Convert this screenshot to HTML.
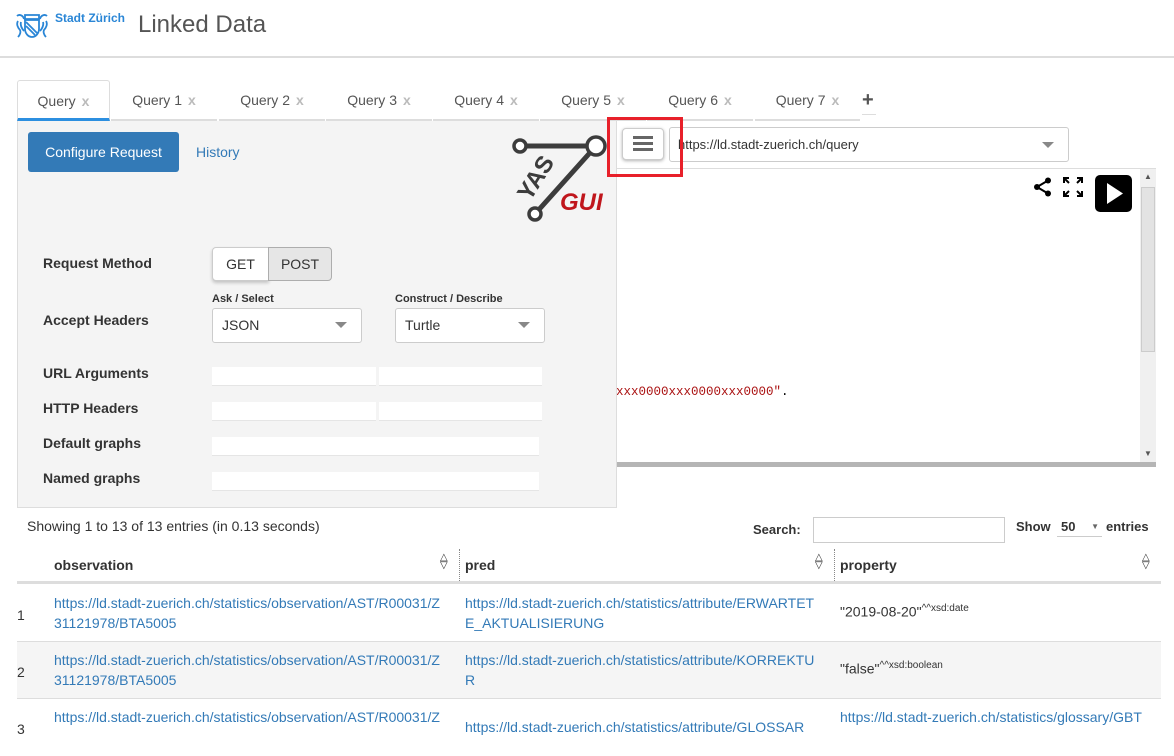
<!DOCTYPE html>
<html><head><meta charset="utf-8"><style>
*{box-sizing:border-box;margin:0;padding:0}
body{width:1174px;height:730px;overflow:hidden;background:#fff;font-family:"Liberation Sans",Arial,sans-serif;color:#333;font-size:14px;position:relative}
.abs{position:absolute}
a{color:#337ab7;text-decoration:none}
.tab{position:absolute;top:80px;height:41px;line-height:41px;font-size:14px;color:#555;text-align:center;border-bottom:2px solid #ddd}
.tab .x{color:#bbb;font-weight:bold;margin-left:6px}
.lbl{position:absolute;left:43px;font-weight:bold;font-size:14px;color:#333}
.inp{position:absolute;background:#fff;border-bottom:1px solid #e5e5e5;height:19px}
.sel{position:absolute;background:#fff;border:1px solid #ccc;border-radius:3px;height:35px;line-height:33px;padding-left:9px;font-size:14px}
.caret{position:absolute;width:0;height:0;border-left:6px solid transparent;border-right:6px solid transparent;border-top:6px solid #888}
.row{position:absolute;left:17px;width:1144px;height:57px;border-bottom:1px solid #ddd;line-height:20px;font-size:14px}
.row div{position:absolute;top:8px}
</style></head><body>
<!-- header -->
<svg class="abs" style="left:16px;top:12px" width="32" height="27" viewBox="0 0 32 27">
<g fill="none" stroke="#2a86d6" stroke-width="1.8">
<path d="M9 3h14v4H9z"/><path d="M9 8h14v9c0 4-3 8-7 8s-7-4-7-8z"/><path d="M10 10l12 12"/><path d="M10 14l9 9"/>
<path d="M1 4c2-2 6-1 7 3M2 9c-2 3 0 7 2 9 1 2 0 5-2 7M5 10c-1 3 1 7 3 9"/>
<path d="M31 4c-2-2-6-1-7 3M30 9c2 3 0 7-2 9-1 2 0 5 2 7M27 10c1 3-1 7-3 9"/>
</g></svg>
<div class="abs" style="left:55px;top:11px;font-size:12px;font-weight:bold;color:#2a86d6">Stadt Zürich</div>
<div class="abs" style="left:138px;top:11px;font-size:24px;color:#555">Linked Data</div>
<div class="abs" style="left:0;top:56px;width:1174px;height:2px;background:#ddd"></div>
<!-- tabs -->
<div class="tab" style="left:17px;width:93px;border:1px solid #ddd;border-bottom:3px solid #2c8fe0;border-radius:3px 3px 0 0;line-height:40px">Query<span class="x">x</span></div>
<div class="tab" style="left:111px;width:106px">Query 1<span class="x">x</span></div>
<div class="tab" style="left:219px;width:106px">Query 2<span class="x">x</span></div>
<div class="tab" style="left:326px;width:106px">Query 3<span class="x">x</span></div>
<div class="tab" style="left:433px;width:106px">Query 4<span class="x">x</span></div>
<div class="tab" style="left:540px;width:106px">Query 5<span class="x">x</span></div>
<div class="tab" style="left:647px;width:106px">Query 6<span class="x">x</span></div>
<div class="tab" style="left:755px;width:105px">Query 7<span class="x">x</span></div>
<div class="abs" style="left:862px;top:89px;font-size:20px;font-weight:bold;color:#555">+</div>
<div class="abs" style="left:862px;top:114px;width:14px;height:1px;background:#ddd"></div>
<!-- editor -->
<div class="abs" style="left:616px;top:168px;width:540px;height:299px;border:1px solid #ddd;background:#fff"></div>
<div class="abs" style="left:1140px;top:169px;width:16px;height:293px;background:#f0f0f0"></div>
<div class="abs" style="left:1141px;top:187px;width:14px;height:165px;background:#e3e3e3;border:1px solid #ccc"></div>
<div class="abs" style="left:1144px;top:172px;font-size:8px;color:#555">▲</div>
<div class="abs" style="left:1144px;top:449px;font-size:8px;color:#555">▼</div>
<div class="abs" style="left:616px;top:462px;width:540px;height:5px;background:#b5b5b5"></div>
<div class="abs" style="left:616px;top:385px;font-family:'Liberation Mono',monospace;font-size:12.5px;color:#a11">xxx0000xxx0000xxx0000"<span style="color:#000">.</span></div>
<svg class="abs" style="left:1033px;top:177px" width="20" height="20" viewBox="0 0 20 20"><g fill="#000"><circle cx="15" cy="3.5" r="3"/><circle cx="4" cy="10" r="3"/><circle cx="15" cy="16.5" r="3"/></g><path d="M15 3.5L4 10L15 16.5" stroke="#000" stroke-width="2" fill="none"/></svg>
<svg class="abs" style="left:1063px;top:177px" width="20" height="20" viewBox="0 0 20 20"><g stroke="#000" stroke-width="2" fill="none"><path d="M1 6V1h5M14 1h5v5M19 14v5h-5M6 19H1v-5M1 1l5 5M19 1l-5 5M19 19l-5-5M1 19l5-5"/></g></svg>
<div class="abs" style="left:1095px;top:175px;width:37px;height:37px;background:#000;border-radius:5px"></div>
<svg class="abs" style="left:1095px;top:175px" width="37" height="37"><path d="M12 8L28 18.5L12 29z" fill="#fff"/></svg>
<!-- endpoint -->
<div class="sel" style="left:669px;top:127px;width:400px;height:35px;font-size:13px;padding-left:8px;color:#333">https://ld.stadt-zuerich.ch/query</div>
<div class="caret" style="left:1042px;top:142px"></div>
<div class="abs" style="left:622px;top:128px;width:42px;height:32px;background:#fff;border:1px solid #ccc;border-radius:4px;box-shadow:0 1px 3px rgba(0,0,0,.3)"></div>
<div class="abs" style="left:633px;top:136px;width:20px;height:3px;background:#666;box-shadow:0 6px 0 #666,0 12px 0 #666"></div>
<!-- config panel -->
<div class="abs" style="left:17px;top:121px;width:600px;height:387px;background:#f4f4f4;border:1px solid #ddd;border-top:none"></div>
<div class="abs" style="left:28px;top:132px;width:151px;height:40px;background:#337ab7;border-radius:3px;color:#fff;font-size:14px;line-height:40px;text-align:center">Configure Request</div>
<div class="abs" style="left:196px;top:144px;font-size:14px;color:#337ab7">History</div>
<svg class="abs" style="left:508px;top:128px" width="106" height="95" viewBox="0 0 106 95">
<path d="M12 18H88M88 18L27 86" stroke="#3c3c3c" stroke-width="5" fill="none"/>
<circle cx="12" cy="18" r="6" fill="#fff" stroke="#3c3c3c" stroke-width="3.5"/>
<circle cx="88" cy="18" r="9" fill="#fff" stroke="#3c3c3c" stroke-width="3.5"/>
<circle cx="27" cy="86" r="6" fill="#fff" stroke="#3c3c3c" stroke-width="3.5"/>
<text x="0" y="0" transform="translate(22,74) rotate(-58)" font-family="Liberation Sans" font-weight="bold" font-size="24" fill="#3c3c3c">YAS</text>
<text x="52" y="82" font-family="Liberation Sans" font-weight="bold" font-style="italic" font-size="24" fill="#c0161c">GUI</text>
</svg>
<div class="lbl" style="top:255px">Request Method</div>
<div class="abs" style="left:212px;top:247px;width:57px;height:34px;background:#fff;border:1px solid #ccc;border-radius:4px 0 0 4px;line-height:32px;text-align:center;box-shadow:0 2px 3px rgba(0,0,0,.2)">GET</div>
<div class="abs" style="left:268px;top:247px;width:64px;height:34px;background:#e6e6e6;border:1px solid #adadad;border-radius:0 4px 4px 0;line-height:32px;text-align:center">POST</div>
<div class="abs" style="left:212px;top:293px;font-size:11px;font-weight:bold">Ask / Select</div>
<div class="abs" style="left:395px;top:293px;font-size:11px;font-weight:bold">Construct / Describe</div>
<div class="lbl" style="top:312px">Accept Headers</div>
<div class="sel" style="left:212px;top:308px;width:150px">JSON</div><div class="caret" style="left:335px;top:322px"></div>
<div class="sel" style="left:395px;top:308px;width:150px">Turtle</div><div class="caret" style="left:518px;top:322px"></div>
<div class="lbl" style="top:365px">URL Arguments</div>
<div class="inp" style="left:212px;top:367px;width:164px"></div><div class="inp" style="left:379px;top:367px;width:163px"></div>
<div class="lbl" style="top:400px">HTTP Headers</div>
<div class="inp" style="left:212px;top:402px;width:164px"></div><div class="inp" style="left:379px;top:402px;width:163px"></div>
<div class="lbl" style="top:435px">Default graphs</div>
<div class="inp" style="left:212px;top:437px;width:327px"></div>
<div class="lbl" style="top:470px">Named graphs</div>
<div class="inp" style="left:212px;top:472px;width:327px"></div>
<!-- red highlight -->
<div class="abs" style="left:607px;top:117px;width:76px;height:60px;border:3px solid #e8202a"></div>
<!-- results -->
<div class="abs" style="left:27px;top:518px;font-size:14px">Showing 1 to 13 of 13 entries (in 0.13 seconds)</div>
<div class="abs" style="left:753px;top:522px;font-size:13px;font-weight:bold">Search:</div>
<div class="abs" style="left:813px;top:517px;width:192px;height:26px;border:1px solid #ccc;background:#fff"></div>
<div class="abs" style="left:1016px;top:519px;font-size:13px;font-weight:bold">Show</div>
<div class="abs" style="left:1057px;top:519px;width:45px;height:18px;border-bottom:1px solid #ccc;font-size:13px;font-weight:bold;padding-left:4px">50 <span style="font-size:8px;color:#666;margin-left:12px;vertical-align:2px">▼</span></div>
<div class="abs" style="left:1106px;top:519px;font-size:13px;font-weight:bold">entries</div>
<div class="abs" style="left:17px;top:547px;width:1144px;height:37px;border-bottom:3px solid #ddd;font-weight:bold;font-size:14px">
<div class="abs" style="left:37px;top:10px">observation</div>
<div class="abs" style="left:448px;top:10px">pred</div>
<div class="abs" style="left:823px;top:10px">property</div>
<div class="abs" style="left:442px;top:2px;height:32px;border-left:1px dotted #888"></div>
<div class="abs" style="left:817px;top:2px;height:32px;border-left:1px dotted #888"></div>
<div class="abs" style="left:423px;top:7px;font-size:10px;line-height:8px;font-weight:normal">△<br>▽</div>
<div class="abs" style="left:798px;top:7px;font-size:10px;line-height:8px;font-weight:normal">△<br>▽</div>
<div class="abs" style="left:1125px;top:7px;font-size:10px;line-height:8px;font-weight:normal">△<br>▽</div>
</div>
<div class="row" style="top:585px">
<span class="abs" style="left:0;top:20px">1</span>
<div style="left:37px"><a>https://ld.stadt-zuerich.ch/statistics/observation/AST/R00031/Z<br>31121978/BTA5005</a></div>
<div style="left:448px"><a>https://ld.stadt-zuerich.ch/statistics/attribute/ERWARTET<br>E_AKTUALISIERUNG</a></div>
<div style="left:823px;top:14px">"2019-08-20"<sup style="font-size:10px">^^xsd:date</sup></div>
</div>
<div class="row" style="top:642px;background:#f5f5f5">
<span class="abs" style="left:0;top:20px">2</span>
<div style="left:37px"><a>https://ld.stadt-zuerich.ch/statistics/observation/AST/R00031/Z<br>31121978/BTA5005</a></div>
<div style="left:448px"><a>https://ld.stadt-zuerich.ch/statistics/attribute/KORREKTU<br>R</a></div>
<div style="left:823px;top:14px">"false"<sup style="font-size:10px">^^xsd:boolean</sup></div>
</div>
<div class="row" style="top:699px;border:none">
<span class="abs" style="left:0;top:20px">3</span>
<div style="left:37px"><a>https://ld.stadt-zuerich.ch/statistics/observation/AST/R00031/Z</a></div>
<div style="left:448px;top:18px"><a>https://ld.stadt-zuerich.ch/statistics/attribute/GLOSSAR</a></div>
<div style="left:823px"><a>https://ld.stadt-zuerich.ch/statistics/glossary/GBT</a></div>
</div>
</body></html>
